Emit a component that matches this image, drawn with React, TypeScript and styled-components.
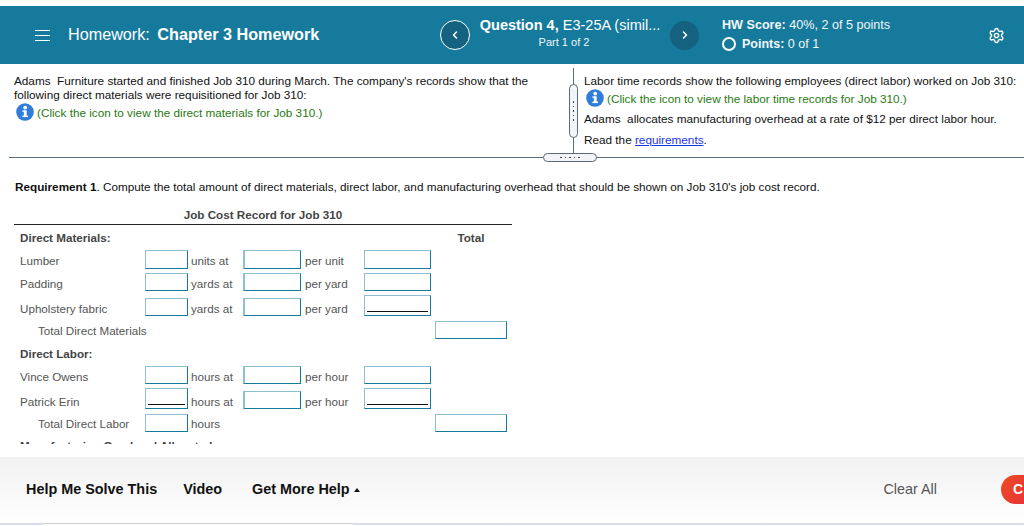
import React from "react";
import styled, { createGlobalStyle } from "styled-components";
import { ChevronLeft, ChevronRight, Settings } from "lucide-react";

const Global = createGlobalStyle`
  html, body { margin: 0; padding: 0; background: #fff; }
  body { font-family: "Liberation Sans", Arial, sans-serif; color: #111; }
`;

const materials = [
  { name: "Lumber", unit: "units at", per: "per unit" },
  { name: "Padding", unit: "yards at", per: "per yard" },
  { name: "Upholstery fabric", unit: "yards at", per: "per yard", filled: true },
];

const labor = [
  { name: "Vince Owens", unit: "hours at", per: "per hour" },
  { name: "Patrick Erin", unit: "hours at", per: "per hour", filled: true, qtyFilled: true },
];

const InfoIcon = () => (
  <svg width="18" height="18" viewBox="0 0 18 18" aria-hidden="true">
    <circle cx="9" cy="9" r="8.8" fill="#2f7dd8" />
    <circle cx="9.2" cy="4.6" r="1.9" fill="#fff" />
    <rect x="7.8" y="7.4" width="2.9" height="6" fill="#fff" />
    <rect x="6.4" y="7.4" width="3" height="1.4" fill="#fff" />
    <rect x="6.4" y="12.6" width="5.6" height="1.5" fill="#fff" />
  </svg>
);

const App = () => (
  <Page>
    <Global />
    <Header>
      <Menu>
        <span />
        <span />
        <span />
      </Menu>
      <Title>
        Homework: <b>Chapter 3 Homework</b>
      </Title>
      <RoundButton $outlined $size={30}>
        <ChevronLeft size={12} strokeWidth={3} />
      </RoundButton>
      <Question>
        <div>
          <b>Question 4,</b> E3-25A (simil...
        </div>
        <small>Part 1 of 2</small>
      </Question>
      <RoundButton $size={29}>
        <ChevronRight size={12} strokeWidth={3} />
      </RoundButton>
      <Score>
        <div>
          <b>HW Score:</b> 40%, 2 of 5 points
        </div>
        <PointsLine>
          <Ring />
          <span>
            <b>Points:</b> 0 of 1
          </span>
        </PointsLine>
      </Score>
      <Gear>
        <Settings size={17} strokeWidth={2} />
      </Gear>
    </Header>

    <Panes>
      <LeftPane>
        <Para>
          Adams&nbsp; Furniture started and finished Job 310 during March. The company's records show that the following
          direct materials were requisitioned for Job 310:
        </Para>
        <InfoLine>
          <InfoIcon />
          <span>(Click the icon to view the direct materials for Job 310.)</span>
        </InfoLine>
      </LeftPane>
      <RightPane>
        <VGrip>
          <i />
          <i />
          <i />
          <i />
          <i />
        </VGrip>
        <Para>Labor time records show the following employees (direct labor) worked on Job 310:</Para>
        <InfoLine $tight>
          <InfoIcon />
          <span>(Click the icon to view the labor time records for Job 310.)</span>
        </InfoLine>
        <Para>Adams&nbsp; allocates manufacturing overhead at a rate of $12 per direct labor hour.</Para>
        <ReadLine>
          Read the <a href="#requirements">requirements</a>.
        </ReadLine>
      </RightPane>
      <HGrip>
        <i />
        <i />
        <i />
        <i />
        <i />
      </HGrip>
    </Panes>

    <Scroller>
      <Requirement>
        <b>Requirement 1</b>. Compute the total amount of direct materials, direct labor, and manufacturing overhead
        that should be shown on Job 310's job cost record.
      </Requirement>
      <TableTitle>Job Cost Record for Job 310</TableTitle>
      <Rows>
        <Row $height={18}>
          <Heading>Direct Materials:</Heading>
          <TotalLabel>Total</TotalLabel>
        </Row>
        {materials.map((m, i) => (
          <Row key={m.name} $height={m.filled ? 21 : i === 0 ? 19 : 18} $extra={m.filled ? 1 : 0} $low={i > 0}>
            <Cell>{m.name}</Cell>
            <Field $h={i === 0 ? 19 : 18} />
            <Unit>{m.unit}</Unit>
            <Field $h={i === 0 ? 19 : 18} $soft />
            <Per>{m.per}</Per>
            <Field $h={m.filled ? 21 : i === 0 ? 19 : 18} $filled={m.filled} />
          </Row>
        ))}
        <Row $height={18}>
          <SubTotal>Total Direct Materials</SubTotal>
          <TotalField />
        </Row>
        <Row $height={19}>
          <Heading>Direct Labor:</Heading>
        </Row>
        {labor.map((m) => (
          <Row key={m.name} $height={m.filled ? 21 : 18} $extra={m.filled ? 1 : 0} $low>
            <Cell>{m.name}</Cell>
            <Field $h={m.qtyFilled ? 21 : 18} $filled={m.qtyFilled} />
            <Unit>{m.unit}</Unit>
            <Field $h={18} $soft />
            <Per>{m.per}</Per>
            <Field $h={m.filled ? 21 : 18} $filled={m.filled} />
          </Row>
        ))}
        <Row $height={18}>
          <SubTotal>Total Direct Labor</SubTotal>
          <Field $h={18} />
          <Unit>hours</Unit>
          <TotalField />
        </Row>
        <Row $height={18}>
          <Heading $wide>Manufacturing Overhead Allocated:</Heading>
        </Row>
      </Rows>
    </Scroller>

    <Footer>
      <HelpLink>Help Me Solve This</HelpLink>
      <HelpLink>Video</HelpLink>
      <HelpLink $gap={4}>
        Get More Help <Caret />
      </HelpLink>
      <ClearAll>Clear All</ClearAll>
      <CheckButton>C</CheckButton>
    </Footer>
    <BottomStrip>
      <span />
    </BottomStrip>
  </Page>
);

const Page = styled.div`
  width: 1024px;
  height: 526px;
  overflow: hidden;
  padding-top: 6px;
  box-sizing: border-box;
  display: flex;
  flex-direction: column;
`;

const Header = styled.header`
  flex: 0 0 58px;
  background: #167a9c;
  color: #fff;
  display: flex;
  align-items: center;
  padding-left: 35px;
  box-sizing: border-box;
`;

const Menu = styled.div`
  width: 15px;
  display: flex;
  flex-direction: column;
  gap: 4px;
  margin-right: 18px;

  span {
    height: 1px;
    background: #fff;
  }
`;

const Title = styled.div`
  width: 372px;
  font-size: 16.2px;
  margin-top: -2px;
  white-space: pre-wrap;

  b {
    margin-left: 3px;
  }
`;

const RoundButton = styled.div<{ $outlined?: boolean; $size: number }>`
  flex: 0 0 ${({ $size }) => $size}px;
  height: ${({ $size }) => $size}px;
  box-sizing: border-box;
  border-radius: 50%;
  background: #14627f;
  border: ${({ $outlined }) => ($outlined ? "1.5px solid #fff" : "none")};
  display: flex;
  align-items: center;
  justify-content: center;
`;

const Question = styled.div`
  width: 200px;
  text-align: center;
  font-size: 14.5px;
  line-height: 17px;
  margin-top: -3px;

  small {
    display: block;
    font-size: 11px;
    line-height: 18px;
    margin-top: -1px;
    padding-right: 12px;
    color: #eef6f9;
  }
`;

const Score = styled.div`
  margin: -1px 0 0 23px;
  width: 266px;
  font-size: 12.6px;
  line-height: 18px;
  color: #f1f7fa;
`;

const PointsLine = styled.div`
  display: flex;
  align-items: center;
  gap: 6px;
  margin-top: 1px;
  font-size: 12.5px;
`;

const Ring = styled.span`
  width: 14px;
  height: 14px;
  box-sizing: border-box;
  border: 2px solid #fff;
  border-radius: 50%;
`;

const Gear = styled.div`
  display: flex;
  align-items: center;
`;

const Panes = styled.section`
  position: relative;
  flex: 0 0 94px;
  margin-left: 9px;
  box-sizing: border-box;
  border-bottom: 1px solid #5d6b78;
  display: flex;
`;

const LeftPane = styled.div`
  width: 564px;
  box-sizing: border-box;
  padding: 10px 36px 0 5px;
`;

const RightPane = styled.div`
  position: relative;
  flex: 1;
  margin-top: 4px;
  padding: 6px 0 0 10px;
  border-left: 1px solid #5d6b78;
`;

const Para = styled.div`
  font-size: 11.75px;
  line-height: 14px;
  color: #111;
`;

const InfoLine = styled.div<{ $tight?: boolean }>`
  display: flex;
  align-items: center;
  gap: 3px;
  font-size: 11.75px;
  color: #287a12;
  height: ${({ $tight }) => ($tight ? "20px" : "18px")};
  margin: ${({ $tight }) => ($tight ? "0 0 4px 2px" : "1px 0 0 2px")};
`;

const ReadLine = styled(Para)`
  margin-top: 7px;

  a {
    color: #1a35e8;
  }
`;

const VGrip = styled.div`
  position: absolute;
  left: -5px;
  top: 16px;
  width: 9px;
  height: 54px;
  box-sizing: border-box;
  border: 1px solid #5d6b78;
  border-radius: 5px;
  background: #f2f4f7;
  display: flex;
  flex-direction: column;
  align-items: center;
  justify-content: center;
  gap: 3px;

  i {
    width: 1.5px;
    height: 1.5px;
    background: #444;
  }
`;

const HGrip = styled.div`
  position: absolute;
  left: 534px;
  bottom: -5px;
  width: 54px;
  height: 9px;
  box-sizing: border-box;
  border: 1px solid #5d6b78;
  border-radius: 5px;
  background: #f2f4f7;
  display: flex;
  align-items: center;
  justify-content: center;
  gap: 3px;

  i {
    width: 1.5px;
    height: 1.5px;
    background: #444;
  }
`;

const Scroller = styled.main`
  flex: 0 0 286px;
  overflow: hidden;
  box-sizing: border-box;
  padding: 22px 0 0 14px;
`;

const Requirement = styled.div`
  font-size: 11.72px;
  line-height: 14px;
  padding-left: 1px;
  white-space: nowrap;
`;

const TableTitle = styled.div`
  width: 498px;
  margin-top: 14px;
  padding-bottom: 3px;
  border-bottom: 1px solid #222;
  text-align: center;
  font-size: 11.65px;
  line-height: 13px;
  font-weight: bold;
  color: #444;
`;

const Rows = styled.div`
  width: 498px;
  margin-top: 3px;
  display: flex;
  flex-direction: column;
  gap: 4px;
  padding-left: 6px;
  box-sizing: border-box;
`;

const Row = styled.div<{ $height: number; $extra?: number; $low?: boolean }>`
  height: ${({ $height }) => $height}px;
  margin-bottom: ${({ $extra }) => $extra ?? 0}px;
  display: grid;
  grid-template-columns: 125px 43px 55px 58px 63px 67px 4px 72px;
  align-items: end;
  font-size: 11.65px;
  line-height: ${({ $low }) => ($low ? 14 : 16)}px;
  color: #555;
`;

const Cell = styled.div`
  grid-column: 1;
  white-space: nowrap;
`;

const SubTotal = styled(Cell)`
  padding-left: 18px;
`;

const Heading = styled.div<{ $wide?: boolean }>`
  grid-column: ${({ $wide }) => ($wide ? "1 / 6" : "1 / 3")};
  font-weight: bold;
  color: #444;
`;

const TotalLabel = styled.div`
  grid-column: 8;
  font-weight: bold;
  color: #444;
  text-align: center;
`;

const Unit = styled.div`
  grid-column: 3;
  padding-left: 3px;
`;

const Per = styled.div`
  grid-column: 5;
  padding-left: 4px;
`;

const Field = styled.div<{ $h: number; $filled?: boolean; $soft?: boolean }>`
  position: relative;
  height: ${({ $h }) => $h}px;
  box-sizing: border-box;
  border: 1px solid #167a9c;
  border-top-color: #8fbfd2;
  border-left-color: #8fbfd2;
  border-left-width: ${({ $soft }) => ($soft ? 2 : 1)}px;

  &::after {
    content: "";
    display: ${({ $filled }) => ($filled ? "block" : "none")};
    position: absolute;
    left: 2px;
    right: 2px;
    bottom: 3px;
    height: 1px;
    background: #111;
  }
`;

const TotalField = styled(Field).attrs({ $h: 18 })`
  grid-column: 8;
`;

const Footer = styled.footer`
  margin-top: 13px;
  flex: 0 0 66px;
  box-sizing: border-box;
  background: linear-gradient(#f1f1f1, #ffffff);
  display: flex;
  align-items: center;
  padding-left: 26px;
  gap: 26px;
`;

const HelpLink = styled.div<{ $gap?: number }>`
  font-size: 14.4px;
  font-weight: bold;
  color: #111;
  white-space: nowrap;
  margin: -2px 0 0 ${({ $gap }) => $gap ?? 0}px;
`;

const Caret = styled.span`
  display: inline-block;
  width: 0;
  height: 0;
  border-left: 3.5px solid transparent;
  border-right: 3.5px solid transparent;
  border-bottom: 4px solid #111;
  vertical-align: 2px;
`;

const ClearAll = styled.div`
  margin-left: auto;
  font-size: 14.4px;
  color: #555;
  margin-top: -2px;
`;

const CheckButton = styled.div`
  flex: 0 0 60px;
  height: 29px;
  margin: -2px -37px 0 38px;
  border-radius: 15px;
  background: linear-gradient(120deg, #ee4a22, #e2224e);
  color: #fff;
  font-size: 14px;
  font-weight: bold;
  line-height: 29px;
  padding-left: 12px;
  box-sizing: border-box;
`;

const BottomStrip = styled.div`
  flex: 0 0 2px;
  background: #d5deea;

  span {
    display: block;
    margin-left: 43px;
    width: 310px;
    height: 2px;
    box-sizing: border-box;
    background: #fff;
    border-top: 1px solid #ccc;
  }
`;

export default App;
